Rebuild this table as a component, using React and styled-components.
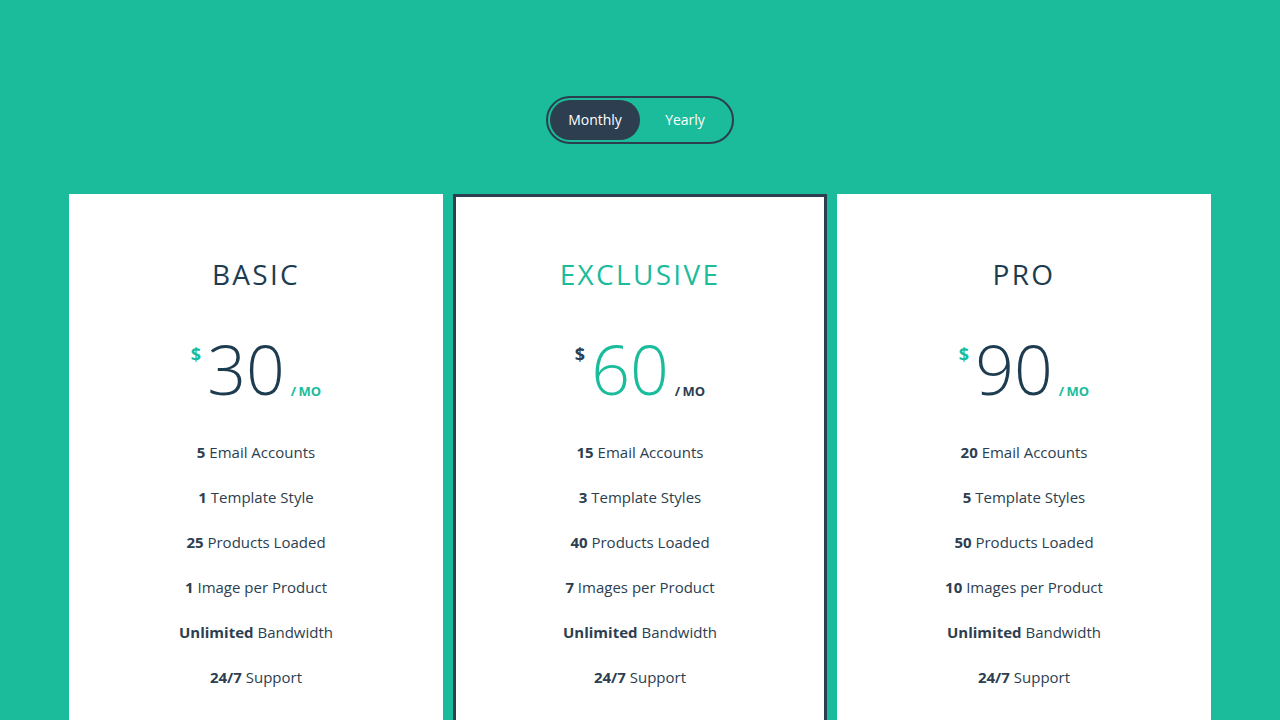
import React, { useState } from "react";
import styled, { createGlobalStyle } from "styled-components";

const GlobalStyle = createGlobalStyle`
  html, body { margin: 0; padding: 0; }
  body {
    background: #1abc9c;
    font-family: "Open Sans", "Noto Sans", sans-serif;
    color: #2c3e50;
    overflow: hidden;
  }
  * { box-sizing: border-box; }
`;

const Page = styled.main`
  min-height: 720px;
  padding-top: 96px;
  display: flex;
  flex-direction: column;
  align-items: center;
`;

const Toggle = styled.div`
  display: flex;
  width: 188px;
  height: 48px;
  padding: 2px;
  border: 2px solid #2c3e50;
  border-radius: 24px;
`;

const ToggleButton = styled.button`
  flex: 0 0 90px;
  height: 40px;
  border: none;
  border-radius: 20px;
  background: ${(p) => (p.$active ? "#2c3e50" : "transparent")};
  color: #ffffff;
  font-family: inherit;
  font-size: 14px;
  line-height: 39px;
  padding: 0 0 1px;
  cursor: pointer;
`;

const Cards = styled.div`
  margin-top: 50px;
  display: grid;
  grid-template-columns: repeat(3, 374px);
  gap: 10px;
`;

const Card = styled.section`
  background: #ffffff;
  border: ${(p) => (p.$featured ? "3px solid #2c3e50" : "none")};
  padding: ${(p) => (p.$featured ? "59px 0 60px" : "62px 0 60px")};
  display: flex;
  flex-direction: column;
  align-items: center;
  min-height: 620px;
`;

const Title = styled.h2`
  margin: 0;
  font-size: 28px;
  line-height: 36px;
  font-weight: 400;
  letter-spacing: 2.3px;
  text-transform: uppercase;
  color: ${(p) => (p.$featured ? "#1abc9c" : "#1e3c50")};
`;

const Price = styled.div`
  margin-top: 43px;
  display: flex;
  align-items: baseline;
  height: 68px;
  line-height: 68px;
`;

const Currency = styled.span`
  align-self: flex-start;
  font-size: 18px;
  line-height: 18px;
  font-weight: 700;
  margin-top: 10px;
  margin-right: 6px;
  color: ${(p) => (p.$featured ? "#2c3e50" : "#1abc9c")};
`;

const Amount = styled.span`
  font-size: 68px;
  font-weight: 300;
  color: ${(p) => (p.$featured ? "#1abc9c" : "#1e3c50")};
`;

const Period = styled.span`
  font-size: 13px;
  font-weight: 700;
  margin-left: 6px;
  position: relative;
  top: 1px;
  word-spacing: -1px;
  color: ${(p) => (p.$featured ? "#2c3e50" : "#1abc9c")};
`;

const Features = styled.ul`
  list-style: none;
  margin: 37px 0 0;
  padding: 0;
  display: flex;
  flex-direction: column;
  gap: 20px;
  text-align: center;
`;

const Feature = styled.li`
  font-size: 15px;
  line-height: 25px;
  color: #2c3e50;
  b { font-weight: 700; }
`;

const plans = [
  {
    name: "Basic",
    price: 30,
    features: [
      ["5", "Email Accounts"],
      ["1", "Template Style"],
      ["25", "Products Loaded"],
      ["1", "Image per Product"],
      ["Unlimited", "Bandwidth"],
      ["24/7", "Support"],
    ],
  },
  {
    name: "Exclusive",
    price: 60,
    featured: true,
    features: [
      ["15", "Email Accounts"],
      ["3", "Template Styles"],
      ["40", "Products Loaded"],
      ["7", "Images per Product"],
      ["Unlimited", "Bandwidth"],
      ["24/7", "Support"],
    ],
  },
  {
    name: "Pro",
    price: 90,
    features: [
      ["20", "Email Accounts"],
      ["5", "Template Styles"],
      ["50", "Products Loaded"],
      ["10", "Images per Product"],
      ["Unlimited", "Bandwidth"],
      ["24/7", "Support"],
    ],
  },
];

export default function App() {
  const [period, setPeriod] = useState("monthly");
  return (
    <>
      <GlobalStyle />
      <Page>
        <Toggle>
          <ToggleButton $active={period === "monthly"} onClick={() => setPeriod("monthly")}>
            Monthly
          </ToggleButton>
          <ToggleButton $active={period === "yearly"} onClick={() => setPeriod("yearly")}>
            Yearly
          </ToggleButton>
        </Toggle>
        <Cards>
          {plans.map((p) => (
            <Card key={p.name} $featured={p.featured}>
              <Title $featured={p.featured}>{p.name}</Title>
              <Price>
                <Currency $featured={p.featured}>$</Currency>
                <Amount $featured={p.featured}>{period === "yearly" ? p.price * 10 : p.price}</Amount>
                <Period $featured={p.featured}>/ MO</Period>
              </Price>
              <Features>
                {p.features.map(([b, t]) => (
                  <Feature key={t}>
                    <b>{b}</b> {t}
                  </Feature>
                ))}
              </Features>
            </Card>
          ))}
        </Cards>
      </Page>
    </>
  );
}
